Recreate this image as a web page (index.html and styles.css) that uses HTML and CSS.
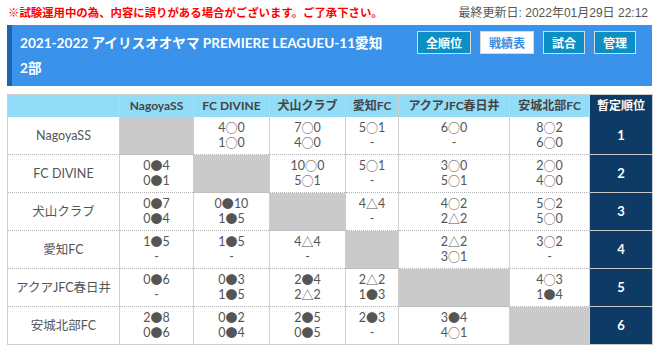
FILE: index.html
```html
<!DOCTYPE html>
<html lang="ja">
<head>
<meta charset="utf-8">
<title>戦績表</title>
<link rel="stylesheet" href="styles.css">
</head>
<body>
<div class="page">
  <div class="topline">
    <p class="notice">※試験運用中の為、内容に誤りがある場合がございます。ご了承下さい。</p>
    <p class="updated">最終更新日: 2022年01月29日 22:12</p>
  </div>
  <div class="league">
    <h1 class="league-title">2021-2022 アイリスオオヤマ PREMIERE LEAGUEU-11愛知<br>2部</h1>
    <nav class="league-nav">
      <a class="btn">全順位</a>
      <a class="btn active">戦績表</a>
      <a class="btn">試合</a>
      <a class="btn">管理</a>
    </nav>
  </div>
  <table class="results">
    <colgroup>
      <col class="c-team"><col class="c1"><col class="c2"><col class="c3"><col class="c4"><col class="c5"><col class="c6"><col class="c-rank">
    </colgroup>
    <thead>
      <tr>
        <th></th><th>NagoyaSS</th><th>FC DIVINE</th><th>犬山クラブ</th><th>愛知FC</th><th>アクアJFC春日井</th><th>安城北部FC</th><th class="rank-h">暫定順位</th>
      </tr>
    </thead>
    <tbody>
      <tr>
        <td class="team">NagoyaSS</td>
        <td class="self"></td>
        <td>4<span class="m">○</span>0<br>1<span class="m">○</span>0</td>
        <td>7<span class="m">○</span>0<br>4<span class="m">○</span>0</td>
        <td>5<span class="m">○</span>1<br>-</td>
        <td>6<span class="m">○</span>0<br>-</td>
        <td>8<span class="m">○</span>2<br>6<span class="m">○</span>0</td>
        <td class="rank">1</td>
      </tr>
      <tr>
        <td class="team">FC DIVINE</td>
        <td>0<span class="m">●</span>4<br>0<span class="m">●</span>1</td>
        <td class="self"></td>
        <td>10<span class="m">○</span>0<br>5<span class="m">○</span>1</td>
        <td>5<span class="m">○</span>1<br>-</td>
        <td>3<span class="m">○</span>0<br>5<span class="m">○</span>1</td>
        <td>2<span class="m">○</span>0<br>4<span class="m">○</span>0</td>
        <td class="rank">2</td>
      </tr>
      <tr>
        <td class="team">犬山クラブ</td>
        <td>0<span class="m">●</span>7<br>0<span class="m">●</span>4</td>
        <td>0<span class="m">●</span>10<br>1<span class="m">●</span>5</td>
        <td class="self"></td>
        <td>4<span class="m">△</span>4<br>-</td>
        <td>4<span class="m">○</span>2<br>2<span class="m">△</span>2</td>
        <td>5<span class="m">○</span>2<br>5<span class="m">○</span>0</td>
        <td class="rank">3</td>
      </tr>
      <tr>
        <td class="team">愛知FC</td>
        <td>1<span class="m">●</span>5<br>-</td>
        <td>1<span class="m">●</span>5<br>-</td>
        <td>4<span class="m">△</span>4<br>-</td>
        <td class="self"></td>
        <td>2<span class="m">△</span>2<br>3<span class="m">○</span>1</td>
        <td>3<span class="m">○</span>2<br>-</td>
        <td class="rank">4</td>
      </tr>
      <tr>
        <td class="team">アクアJFC春日井</td>
        <td>0<span class="m">●</span>6<br>-</td>
        <td>0<span class="m">●</span>3<br>1<span class="m">●</span>5</td>
        <td>2<span class="m">●</span>4<br>2<span class="m">△</span>2</td>
        <td>2<span class="m">△</span>2<br>1<span class="m">●</span>3</td>
        <td class="self"></td>
        <td>4<span class="m">○</span>3<br>1<span class="m">●</span>4</td>
        <td class="rank">5</td>
      </tr>
      <tr>
        <td class="team">安城北部FC</td>
        <td>2<span class="m">●</span>8<br>0<span class="m">●</span>6</td>
        <td>0<span class="m">●</span>2<br>0<span class="m">●</span>4</td>
        <td>2<span class="m">●</span>5<br>0<span class="m">●</span>5</td>
        <td>2<span class="m">●</span>3<br>-</td>
        <td>3<span class="m">●</span>4<br>4<span class="m">○</span>1</td>
        <td class="self"></td>
        <td class="rank">6</td>
      </tr>
    </tbody>
  </table>
</div>
</body>
</html>
```
FILE: styles.css
```css
html, body {
  margin: 0;
  padding: 0;
  background: #fff;
}
body {
  font-family: Lato, "Noto Sans CJK JP", sans-serif;
  color: #555;
}
.page {
  width: 645px;
  padding: 0 6px 0 7px;
}
.topline {
  height: 25px;
  display: flex;
  align-items: center;
  justify-content: space-between;
  padding: 0 4px 0 1px;
}
.topline p {
  margin: 0;
}
.notice {
  color: #f00;
  font-weight: bold;
  font-size: 11.4px;
  line-height: 16px;
}
.updated {
  color: #555;
  font-family: "Liberation Sans", "Noto Sans CJK JP", sans-serif;
  font-size: 12px;
  line-height: 16px;
}
.league {
  display: flex;
  justify-content: space-between;
  align-items: flex-start;
  background: #3a92ea;
  border-left: 5px solid #1d63b0;
  height: 61px;
  box-sizing: border-box;
  padding: 6px 16px 0 8px;
}
.league-title {
  margin: 0;
  color: #fff;
  font-size: 13.6px;
  font-weight: bold;
  line-height: 25px;
}
.league-nav {
  display: flex;
  gap: 9px;
}
.btn {
  display: block;
  box-sizing: border-box;
  height: 23px;
  padding: 0 8px;
  border: 1px solid #d9d9d9;
  background: #0c8fc4;
  color: #fff;
  font-family: "Noto Sans CJK JP", sans-serif;
  font-size: 12px;
  font-weight: bold;
  line-height: 21px;
  text-align: center;
}
.btn.active {
  background: #fff;
  color: #3a8ee0;
}
.results {
  margin-top: 8px;
  width: 645px;
  table-layout: fixed;
  border-collapse: collapse;
  border: 1px solid #cfcfcf;
}
.c-team { width: 112px; }
.c1 { width: 74px; }
.c2 { width: 76px; }
.c3 { width: 76px; }
.c4 { width: 53px; }
.c5 { width: 111px; }
.c6 { width: 80px; }
.c-rank { width: 63px; }
.results th {
  background: #93dcf8;
  color: #444;
  font-size: 12px;
  font-weight: bold;
  height: 22px;
  padding: 0;
  border-left: 1px solid #cfcfcf;
  line-height: 14px;
}
.results th.rank-h {
  background: #0e3a66;
  color: #fff;
}
.results td {
  border-left: 1px solid #cfcfcf;
  border-bottom: 1px dotted #b5b5b5;
  text-align: center;
  vertical-align: middle;
  font-size: 12.5px;
  line-height: 15px;
  color: #555;
  padding: 3px 0 4px;
  height: 30px;
}
.m {
  font-family: "Noto Sans CJK JP", sans-serif;
  font-size: 12px;
  line-height: 15px;
  vertical-align: top;
}
.results td.self {
  background: #cacaca;
}
.results td.rank {
  background: #0e3a66;
  color: #fff;
  font-weight: bold;
  font-size: 13px;
  border-bottom: 1px solid #c8c8c8;
}
```
